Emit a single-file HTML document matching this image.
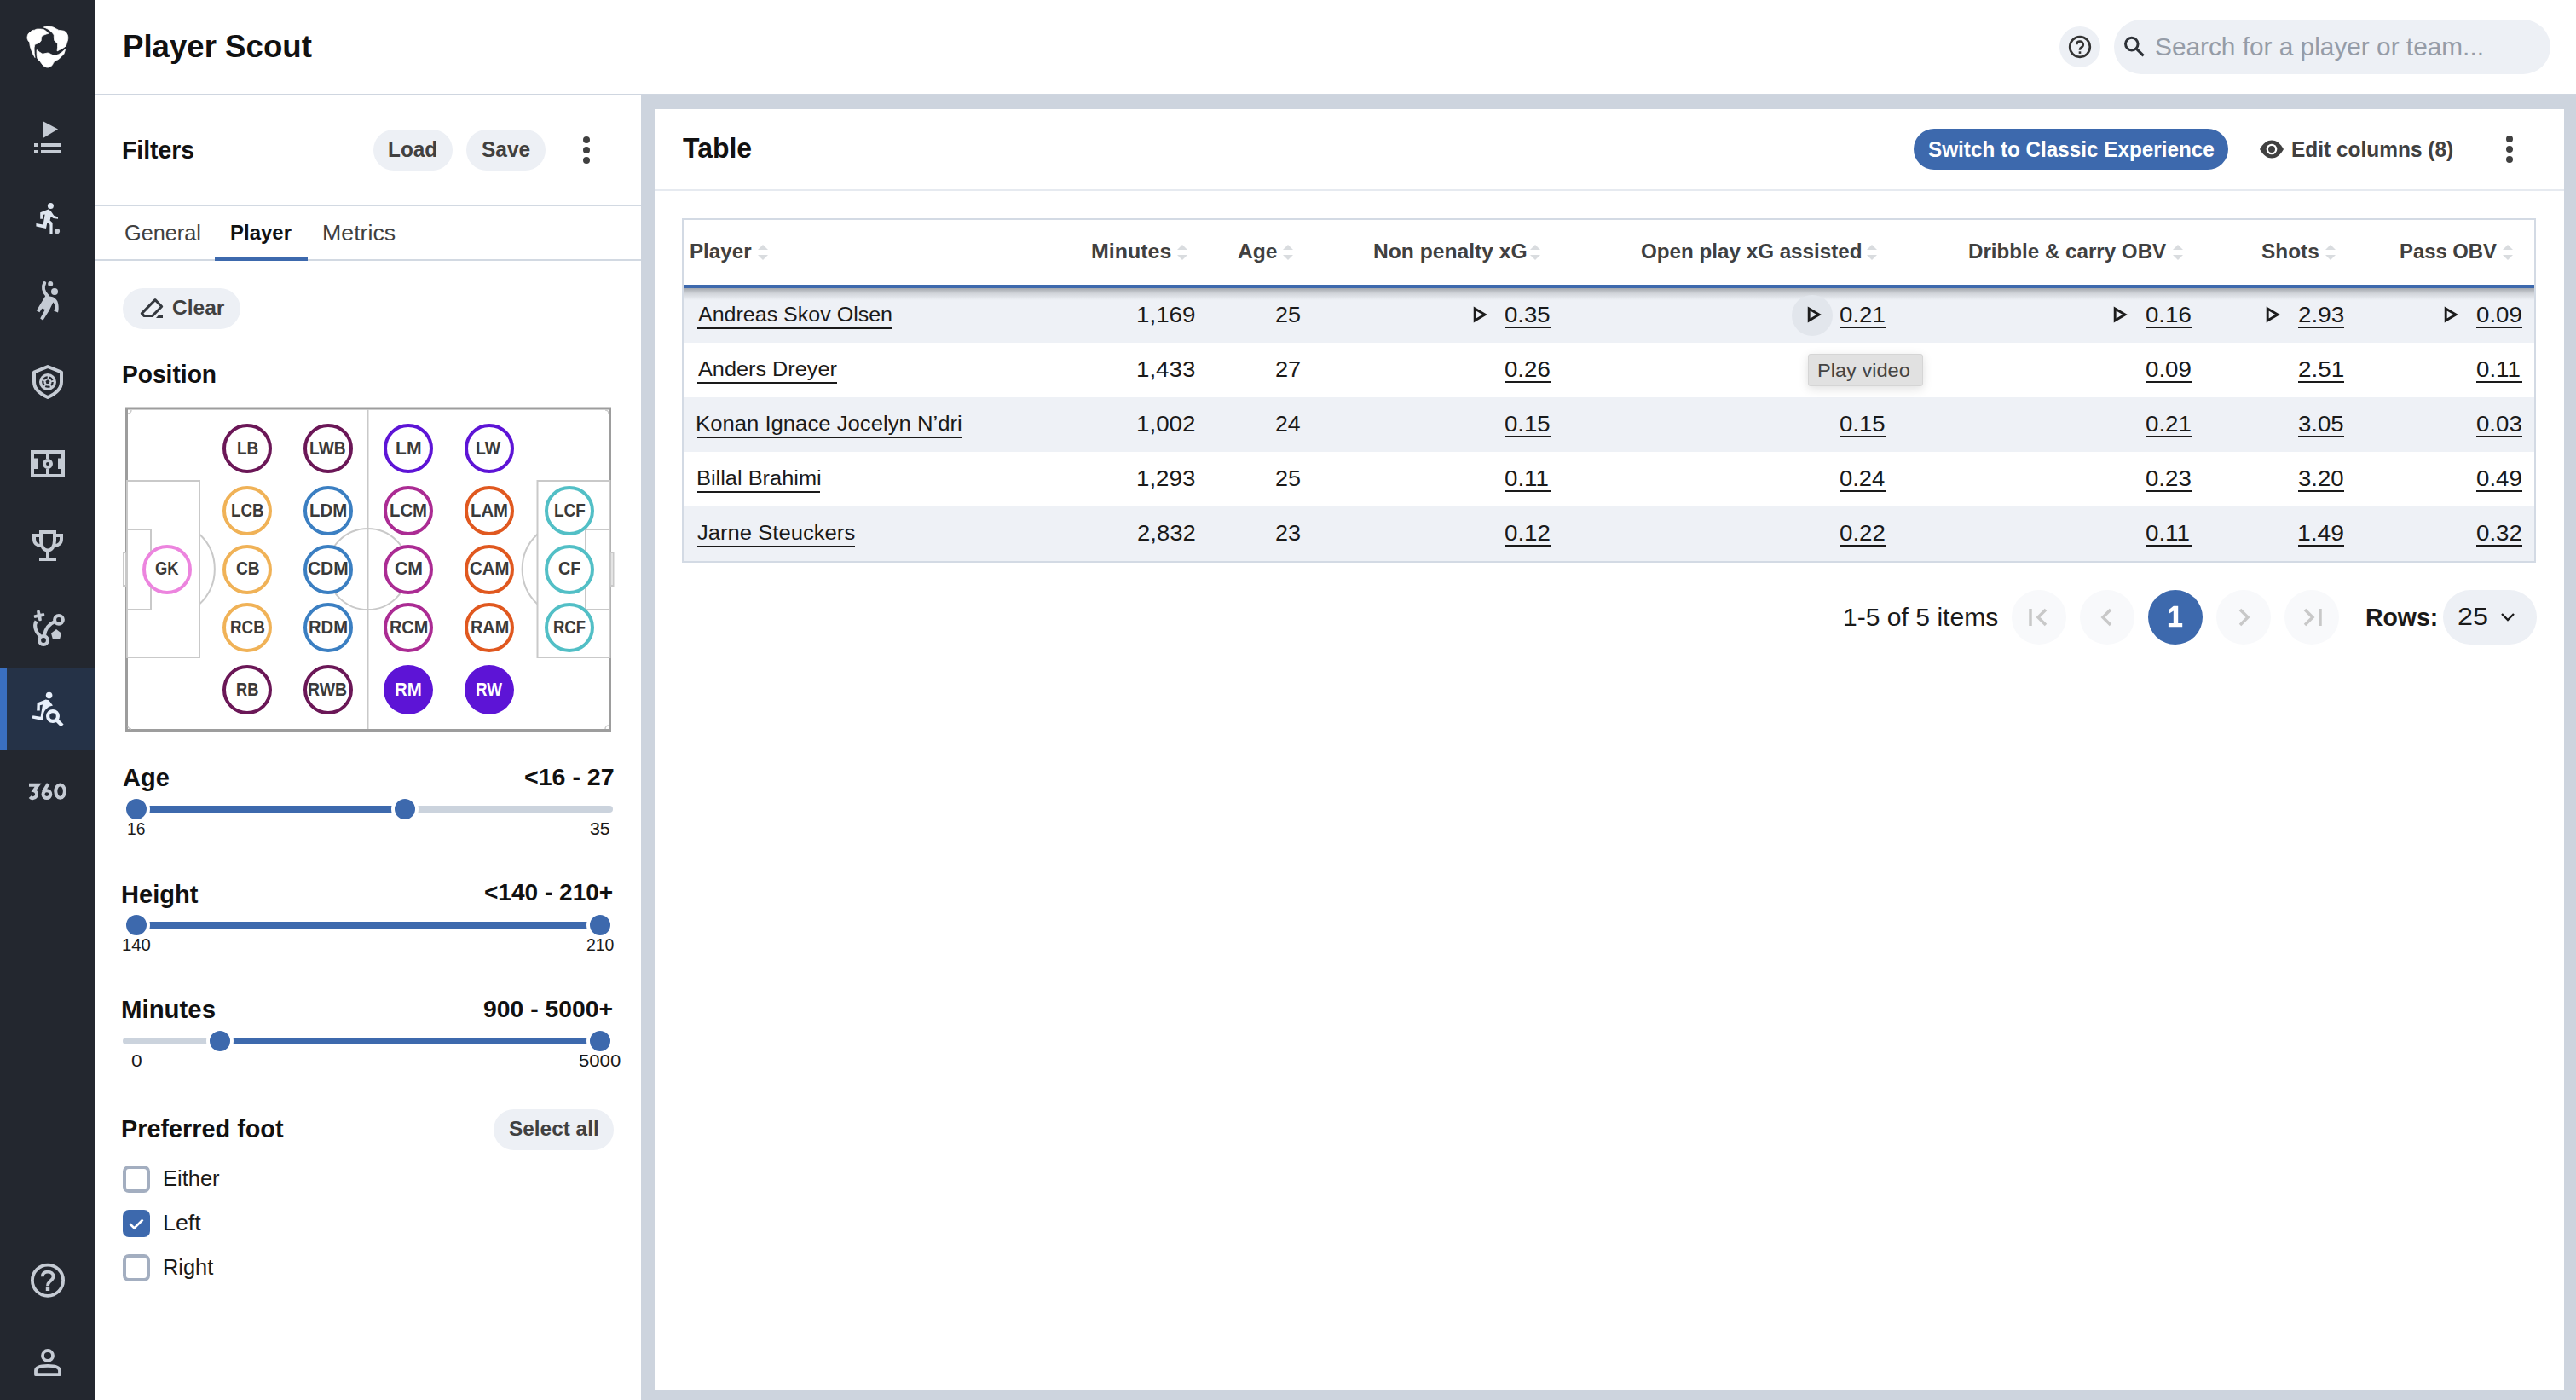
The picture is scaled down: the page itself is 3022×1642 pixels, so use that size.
<!DOCTYPE html><html><head><meta charset="utf-8"><style>
html,body{margin:0;padding:0;width:3022px;height:1642px;overflow:hidden;background:#fff;font-family:"Liberation Sans",sans-serif;}
.t{position:absolute;white-space:nowrap;}.r{position:absolute;}svg{position:absolute;overflow:visible;}
</style></head><body>
<div class="r" style="left:112px;top:112px;width:2910px;height:1530px;background:#cdd4de;"></div>
<div class="r" style="left:112px;top:112px;width:640px;height:1530px;background:#fff;"></div>
<div class="r" style="left:768px;top:128px;width:2240px;height:1502px;background:#fff;"></div>
<div class="r" style="left:112px;top:110px;width:2910px;height:2px;background:#cfd6e0;"></div>
<div class="r" style="left:0px;top:0px;width:112px;height:1642px;background:#23272f;"></div>
<div class="r" style="left:0px;top:784px;width:112px;height:96px;background:#253247;"></div>
<div class="r" style="left:0px;top:784px;width:8px;height:96px;background:#3a6fc0;"></div>
<div class="t" style="left:143.55px;top:36.11px;font-size:37.31px;line-height:37.31px;color:#111;transform:scaleX(0.9818);transform-origin:0 0;font-weight:700;">Player Scout</div>
<div class="r" style="left:2416px;top:31px;width:48px;height:48px;border-radius:50%;background:#edf0f5"></div>
<svg style="left:2426px;top:41px" width="28" height="28" viewBox="0 0 28 28"><circle cx="14" cy="14" r="11.8" fill="none" stroke="#333" stroke-width="2.7"/><path d="M10.3 11.3a3.7 3.7 0 1 1 5.5 3.2c-1.2.7-1.8 1.3-1.8 2.6v.7" fill="none" stroke="#333" stroke-width="2.6"/><rect x="12.7" y="19.3" width="2.6" height="2.6" fill="#333"/></svg>
<div class="r" style="left:2480px;top:23px;width:512px;height:64px;border-radius:32px;background:#edf0f5"></div>
<svg style="left:2490px;top:41px" width="28" height="28" viewBox="0 0 28 28"><circle cx="10.8" cy="10.6" r="7.3" fill="none" stroke="#2e3238" stroke-width="3"/><path d="M16 15.8l8.6 8.6" stroke="#2e3238" stroke-width="3.2"/></svg>
<div class="t" style="left:2527.95px;top:39.59px;font-size:30.01px;line-height:30.01px;color:#959ca7;transform:scaleX(0.9934);transform-origin:0 0;">Search for a player or team...</div>
<div class="t" style="left:143.10px;top:161.52px;font-size:28.91px;line-height:28.91px;color:#111;transform:scaleX(0.9804);transform-origin:0 0;font-weight:700;">Filters</div>
<div class="r" style="left:438px;top:152px;width:93px;height:48px;border-radius:24px;background:#edf0f5"></div>
<div class="r" style="left:547px;top:152px;width:93px;height:48px;border-radius:24px;background:#edf0f5"></div>
<div class="t" style="left:455.37px;top:163.34px;font-size:24.87px;line-height:24.87px;color:#404040;transform:scaleX(0.9803);transform-origin:0 0;font-weight:700;">Load</div>
<div class="t" style="left:565.29px;top:163.34px;font-size:24.87px;line-height:24.87px;color:#404040;transform:scaleX(0.9855);transform-origin:0 0;font-weight:700;">Save</div>
<div class="r" style="left:684px;top:160px;width:8px;height:8px;border-radius:50%;background:#404040"></div>
<div class="r" style="left:684px;top:172px;width:8px;height:8px;border-radius:50%;background:#404040"></div>
<div class="r" style="left:684px;top:184px;width:8px;height:8px;border-radius:50%;background:#404040"></div>
<div class="r" style="left:112px;top:240px;width:640px;height:2px;background:#d2d9e2;"></div>
<div class="t" style="left:145.73px;top:260.80px;font-size:25.04px;line-height:25.04px;color:#404040;transform:scaleX(1.0099);transform-origin:0 0;">General</div>
<div class="t" style="left:270.40px;top:261.31px;font-size:24.44px;line-height:24.44px;color:#111;transform:scaleX(0.9807);transform-origin:0 0;font-weight:700;">Player</div>
<div class="t" style="left:377.81px;top:260.80px;font-size:25.04px;line-height:25.04px;color:#404040;transform:scaleX(1.0678);transform-origin:0 0;">Metrics</div>
<div class="r" style="left:112px;top:304px;width:640px;height:2px;background:#d2d9e2;"></div>
<div class="r" style="left:252px;top:302px;width:109px;height:4px;background:#3d69ad;"></div>
<div class="r" style="left:144px;top:338px;width:138px;height:48px;border-radius:24px;background:#edf0f5"></div>
<svg style="left:155px;top:340px" width="50" height="40" viewBox="0 0 50 40"><path d="M27 11.6 L34.7 19.5 L23.6 30.6 H14.2 L11.3 27.6 Z" fill="none" stroke="#35393f" stroke-width="3" stroke-linejoin="round"/><path d="M28 33 L31.5 29 H36 V33 Z" fill="#35393f"/></svg>
<div class="t" style="left:201.99px;top:349.38px;font-size:24.35px;line-height:24.35px;color:#404040;transform:scaleX(1.0075);transform-origin:0 0;font-weight:700;">Clear</div>
<div class="t" style="left:142.72px;top:424.56px;font-size:28.86px;line-height:28.86px;color:#111;transform:scaleX(0.9753);transform-origin:0 0;font-weight:700;">Position</div>
<svg style="left:0;top:0" width="3022" height="1642"><rect x="148.5" y="479" width="567" height="377.5" fill="none" stroke="#9d9d9d" stroke-width="3"/><line x1="431.5" y1="480" x2="431.5" y2="855" stroke="#c9c9c9" stroke-width="2"/><circle cx="431.5" cy="667.5" r="47.5" fill="none" stroke="#c9c9c9" stroke-width="2"/><rect x="149" y="564" width="85" height="207" fill="none" stroke="#c9c9c9" stroke-width="2"/><rect x="149" y="621" width="28" height="94" fill="none" stroke="#c9c9c9" stroke-width="2"/><rect x="630.5" y="564" width="85" height="207" fill="none" stroke="#c9c9c9" stroke-width="2"/><rect x="687" y="621" width="28" height="94" fill="none" stroke="#c9c9c9" stroke-width="2"/><path d="M234 626.5 A56 56 0 0 1 234 708.5" fill="none" stroke="#c9c9c9" stroke-width="2"/><path d="M630.5 626.5 A56 56 0 0 0 630.5 708.5" fill="none" stroke="#c9c9c9" stroke-width="2"/><rect x="145" y="648" width="3" height="39" fill="none" stroke="#c9c9c9" stroke-width="2"/><rect x="716.5" y="648" width="3" height="39" fill="none" stroke="#c9c9c9" stroke-width="2"/><path d="M150 485 A4 4 0 0 0 154 481" fill="none" stroke="#c9c9c9" stroke-width="1.5"/><path d="M714 485 A4 4 0 0 0 710 481" fill="none" stroke="#c9c9c9" stroke-width="1.5"/><path d="M150 851 A4 4 0 0 0 154 855" fill="none" stroke="#c9c9c9" stroke-width="1.5"/><path d="M714 851 A4 4 0 0 0 710 855" fill="none" stroke="#c9c9c9" stroke-width="1.5"/></svg>
<div class="r" style="left:167.0px;top:638.5px;width:50px;height:50px;border-radius:50%;border:4px solid #ec84de;background:#fff"></div>
<div class="t" style="left:182.25px;top:656.37px;font-size:22.00px;line-height:22.00px;color:#3a3a3a;transform:scaleX(0.8340);transform-origin:0 0;font-weight:700;">GK</div>
<div class="r" style="left:261.3px;top:497.0px;width:50px;height:50px;border-radius:50%;border:4px solid #6b1757;background:#fff"></div>
<div class="t" style="left:277.78px;top:514.87px;font-size:22.00px;line-height:22.00px;color:#3a3a3a;transform:scaleX(0.8602);transform-origin:0 0;font-weight:700;">LB</div>
<div class="r" style="left:261.3px;top:569.8px;width:50px;height:50px;border-radius:50%;border:4px solid #f0b257;background:#fff"></div>
<div class="t" style="left:271.20px;top:587.67px;font-size:22.00px;line-height:22.00px;color:#3a3a3a;transform:scaleX(0.8493);transform-origin:0 0;font-weight:700;">LCB</div>
<div class="r" style="left:261.3px;top:638.5px;width:50px;height:50px;border-radius:50%;border:4px solid #f0b257;background:#fff"></div>
<div class="t" style="left:276.81px;top:656.37px;font-size:22.00px;line-height:22.00px;color:#3a3a3a;transform:scaleX(0.8703);transform-origin:0 0;font-weight:700;">CB</div>
<div class="r" style="left:261.3px;top:707.0px;width:50px;height:50px;border-radius:50%;border:4px solid #f0b257;background:#fff"></div>
<div class="t" style="left:270.04px;top:724.87px;font-size:22.00px;line-height:22.00px;color:#3a3a3a;transform:scaleX(0.8541);transform-origin:0 0;font-weight:700;">RCB</div>
<div class="r" style="left:261.3px;top:780.3px;width:50px;height:50px;border-radius:50%;border:4px solid #6b1757;background:#fff"></div>
<div class="t" style="left:277.23px;top:798.17px;font-size:22.00px;line-height:22.00px;color:#3a3a3a;transform:scaleX(0.8292);transform-origin:0 0;font-weight:700;">RB</div>
<div class="r" style="left:355.6px;top:497.0px;width:50px;height:50px;border-radius:50%;border:4px solid #6b1757;background:#fff"></div>
<div class="t" style="left:362.92px;top:514.87px;font-size:22.00px;line-height:22.00px;color:#3a3a3a;transform:scaleX(0.8694);transform-origin:0 0;font-weight:700;">LWB</div>
<div class="r" style="left:355.6px;top:569.8px;width:50px;height:50px;border-radius:50%;border:4px solid #3b7fc2;background:#fff"></div>
<div class="t" style="left:362.84px;top:587.67px;font-size:22.00px;line-height:22.00px;color:#3a3a3a;transform:scaleX(0.9260);transform-origin:0 0;font-weight:700;">LDM</div>
<div class="r" style="left:355.6px;top:638.5px;width:50px;height:50px;border-radius:50%;border:4px solid #3b7fc2;background:#fff"></div>
<div class="t" style="left:361.34px;top:656.37px;font-size:22.00px;line-height:22.00px;color:#3a3a3a;transform:scaleX(0.9512);transform-origin:0 0;font-weight:700;">CDM</div>
<div class="r" style="left:355.6px;top:707.0px;width:50px;height:50px;border-radius:50%;border:4px solid #3b7fc2;background:#fff"></div>
<div class="t" style="left:361.85px;top:724.87px;font-size:22.00px;line-height:22.00px;color:#3a3a3a;transform:scaleX(0.9203);transform-origin:0 0;font-weight:700;">RDM</div>
<div class="r" style="left:355.6px;top:780.3px;width:50px;height:50px;border-radius:50%;border:4px solid #6b1757;background:#fff"></div>
<div class="t" style="left:361.45px;top:798.17px;font-size:22.00px;line-height:22.00px;color:#3a3a3a;transform:scaleX(0.8848);transform-origin:0 0;font-weight:700;">RWB</div>
<div class="r" style="left:450.0px;top:497.0px;width:50px;height:50px;border-radius:50%;border:4px solid #5d14d6;background:#fff"></div>
<div class="t" style="left:464.04px;top:514.87px;font-size:22.00px;line-height:22.00px;color:#3a3a3a;transform:scaleX(0.9611);transform-origin:0 0;font-weight:700;">LM</div>
<div class="r" style="left:450.0px;top:569.8px;width:50px;height:50px;border-radius:50%;border:4px solid #ab2b93;background:#fff"></div>
<div class="t" style="left:457.34px;top:587.67px;font-size:22.00px;line-height:22.00px;color:#3a3a3a;transform:scaleX(0.9215);transform-origin:0 0;font-weight:700;">LCM</div>
<div class="r" style="left:450.0px;top:638.5px;width:50px;height:50px;border-radius:50%;border:4px solid #ab2b93;background:#fff"></div>
<div class="t" style="left:463.08px;top:656.37px;font-size:22.00px;line-height:22.00px;color:#3a3a3a;transform:scaleX(0.9642);transform-origin:0 0;font-weight:700;">CM</div>
<div class="r" style="left:450.0px;top:707.0px;width:50px;height:50px;border-radius:50%;border:4px solid #ab2b93;background:#fff"></div>
<div class="t" style="left:456.72px;top:724.87px;font-size:22.00px;line-height:22.00px;color:#3a3a3a;transform:scaleX(0.9012);transform-origin:0 0;font-weight:700;">RCM</div>
<div class="r" style="left:450.0px;top:780.3px;width:58px;height:58px;border-radius:50%;background:#5d14d6;"></div>
<div class="t" style="left:463.44px;top:798.17px;font-size:22.00px;line-height:22.00px;color:#fff;transform:scaleX(0.9274);transform-origin:0 0;font-weight:700;">RM</div>
<div class="r" style="left:544.8px;top:497.0px;width:50px;height:50px;border-radius:50%;border:4px solid #5d14d6;background:#fff"></div>
<div class="t" style="left:558.30px;top:514.87px;font-size:22.00px;line-height:22.00px;color:#3a3a3a;transform:scaleX(0.8866);transform-origin:0 0;font-weight:700;">LW</div>
<div class="r" style="left:544.8px;top:569.8px;width:50px;height:50px;border-radius:50%;border:4px solid #e0581f;background:#fff"></div>
<div class="t" style="left:552.14px;top:587.67px;font-size:22.00px;line-height:22.00px;color:#3a3a3a;transform:scaleX(0.9215);transform-origin:0 0;font-weight:700;">LAM</div>
<div class="r" style="left:544.8px;top:638.5px;width:50px;height:50px;border-radius:50%;border:4px solid #e0581f;background:#fff"></div>
<div class="t" style="left:551.16px;top:656.37px;font-size:22.00px;line-height:22.00px;color:#3a3a3a;transform:scaleX(0.9261);transform-origin:0 0;font-weight:700;">CAM</div>
<div class="r" style="left:544.8px;top:707.0px;width:50px;height:50px;border-radius:50%;border:4px solid #e0581f;background:#fff"></div>
<div class="t" style="left:551.52px;top:724.87px;font-size:22.00px;line-height:22.00px;color:#3a3a3a;transform:scaleX(0.9012);transform-origin:0 0;font-weight:700;">RAM</div>
<div class="r" style="left:544.8px;top:780.3px;width:58px;height:58px;border-radius:50%;background:#5d14d6;"></div>
<div class="t" style="left:557.84px;top:798.17px;font-size:22.00px;line-height:22.00px;color:#fff;transform:scaleX(0.8533);transform-origin:0 0;font-weight:700;">RW</div>
<div class="r" style="left:639.0px;top:569.8px;width:50px;height:50px;border-radius:50%;border:4px solid #52bfc6;background:#fff"></div>
<div class="t" style="left:649.64px;top:587.67px;font-size:22.00px;line-height:22.00px;color:#3a3a3a;transform:scaleX(0.8595);transform-origin:0 0;font-weight:700;">LCF</div>
<div class="r" style="left:639.0px;top:638.5px;width:50px;height:50px;border-radius:50%;border:4px solid #52bfc6;background:#fff"></div>
<div class="t" style="left:655.14px;top:656.37px;font-size:22.00px;line-height:22.00px;color:#3a3a3a;transform:scaleX(0.8943);transform-origin:0 0;font-weight:700;">CF</div>
<div class="r" style="left:639.0px;top:707.0px;width:50px;height:50px;border-radius:50%;border:4px solid #52bfc6;background:#fff"></div>
<div class="t" style="left:649.07px;top:724.87px;font-size:22.00px;line-height:22.00px;color:#3a3a3a;transform:scaleX(0.8384);transform-origin:0 0;font-weight:700;">RCF</div>
<div class="t" style="left:143.68px;top:898.31px;font-size:28.68px;line-height:28.68px;color:#111;transform:scaleX(1.0115);transform-origin:0 0;font-weight:700;">Age</div>
<div class="t" style="left:614.50px;top:898.61px;font-size:27.03px;line-height:27.03px;color:#111;transform:scaleX(1.0572);transform-origin:0 0;font-weight:700;">&lt;16 - 27</div>
<div class="r" style="left:144px;top:945px;width:575px;height:8px;background:#cbd3dd;border-radius:4px;"></div>
<div class="r" style="left:160px;top:945px;width:315px;height:8px;background:#3d69ad;"></div>
<div class="r" style="left:144px;top:933px;width:24px;height:24px;border-radius:50%;background:#3d69ad;border:4px solid #fff"></div>
<div class="r" style="left:459px;top:933px;width:24px;height:24px;border-radius:50%;background:#3d69ad;border:4px solid #fff"></div>
<div class="t" style="left:149.03px;top:962.99px;font-size:19.50px;line-height:19.50px;color:#1a1a1a;transform:scaleX(0.9872);transform-origin:0 0;">16</div>
<div class="t" style="left:692.19px;top:962.99px;font-size:19.50px;line-height:19.50px;color:#1a1a1a;transform:scaleX(1.0930);transform-origin:0 0;">35</div>
<div class="t" style="left:142.46px;top:1034.81px;font-size:28.68px;line-height:28.68px;color:#111;transform:scaleX(1.0131);transform-origin:0 0;font-weight:700;">Height</div>
<div class="t" style="left:567.82px;top:1033.71px;font-size:27.03px;line-height:27.03px;color:#111;transform:scaleX(1.0379);transform-origin:0 0;font-weight:700;">&lt;140 - 210+</div>
<div class="r" style="left:144px;top:1081px;width:575px;height:8px;background:#cbd3dd;border-radius:4px;"></div>
<div class="r" style="left:160px;top:1081px;width:544px;height:8px;background:#3d69ad;"></div>
<div class="r" style="left:144px;top:1069px;width:24px;height:24px;border-radius:50%;background:#3d69ad;border:4px solid #fff"></div>
<div class="r" style="left:688px;top:1069px;width:24px;height:24px;border-radius:50%;background:#3d69ad;border:4px solid #fff"></div>
<div class="t" style="left:142.86px;top:1098.99px;font-size:19.50px;line-height:19.50px;color:#1a1a1a;transform:scaleX(1.0400);transform-origin:0 0;">140</div>
<div class="t" style="left:687.62px;top:1098.99px;font-size:19.50px;line-height:19.50px;color:#1a1a1a;transform:scaleX(0.9970);transform-origin:0 0;">210</div>
<div class="t" style="left:142.43px;top:1170.41px;font-size:28.68px;line-height:28.68px;color:#111;transform:scaleX(1.0250);transform-origin:0 0;font-weight:700;">Minutes</div>
<div class="t" style="left:567.02px;top:1170.61px;font-size:27.03px;line-height:27.03px;color:#111;transform:scaleX(1.0489);transform-origin:0 0;font-weight:700;">900 - 5000+</div>
<div class="r" style="left:144px;top:1217px;width:575px;height:8px;background:#cbd3dd;border-radius:4px;"></div>
<div class="r" style="left:258px;top:1217px;width:446px;height:8px;background:#3d69ad;"></div>
<div class="r" style="left:242px;top:1205px;width:24px;height:24px;border-radius:50%;background:#3d69ad;border:4px solid #fff"></div>
<div class="r" style="left:688px;top:1205px;width:24px;height:24px;border-radius:50%;background:#3d69ad;border:4px solid #fff"></div>
<div class="t" style="left:153.61px;top:1235.29px;font-size:19.50px;line-height:19.50px;color:#1a1a1a;transform:scaleX(1.1693);transform-origin:0 0;">0</div>
<div class="t" style="left:679.11px;top:1235.29px;font-size:19.50px;line-height:19.50px;color:#1a1a1a;transform:scaleX(1.1353);transform-origin:0 0;">5000</div>
<div class="t" style="left:142.47px;top:1310.32px;font-size:29.15px;line-height:29.15px;color:#111;transform:scaleX(0.9888);transform-origin:0 0;font-weight:700;">Preferred foot</div>
<div class="r" style="left:579px;top:1301px;width:141px;height:48px;border-radius:24px;background:#edf0f5"></div>
<div class="t" style="left:597.00px;top:1312.22px;font-size:24.55px;line-height:24.55px;color:#404040;transform:scaleX(0.9934);transform-origin:0 0;font-weight:700;">Select all</div>
<div class="r" style="left:144px;top:1367px;width:24px;height:24px;border-radius:7px;border:4px solid #a3aec0;background:#fff"></div>
<div class="t" style="left:190.91px;top:1370.22px;font-size:24.90px;line-height:24.90px;color:#1a1a1a;transform:scaleX(1.0243);transform-origin:0 0;">Either</div>
<div class="r" style="left:144px;top:1419px;width:32px;height:32px;border-radius:7px;background:#3d69ad"></div>
<svg style="left:144px;top:1419px" width="32" height="32" viewBox="0 0 32 32"><path d="M8.5 16.5l5 5 10-10" fill="none" stroke="#fff" stroke-width="2.6"/></svg>
<div class="t" style="left:190.80px;top:1421.52px;font-size:24.90px;line-height:24.90px;color:#1a1a1a;transform:scaleX(1.0763);transform-origin:0 0;">Left</div>
<div class="r" style="left:144px;top:1471px;width:24px;height:24px;border-radius:7px;border:4px solid #a3aec0;background:#fff"></div>
<div class="t" style="left:190.92px;top:1473.92px;font-size:24.90px;line-height:24.90px;color:#1a1a1a;transform:scaleX(1.0198);transform-origin:0 0;">Right</div>
<div class="t" style="left:801.04px;top:158.15px;font-size:32.42px;line-height:32.42px;color:#111;transform:scaleX(0.9857);transform-origin:0 0;font-weight:700;">Table</div>
<div class="r" style="left:2245px;top:151px;width:369px;height:48px;border-radius:24px;background:#3d69ad"></div>
<div class="t" style="left:2261.90px;top:162.14px;font-size:26.05px;line-height:26.05px;color:#fff;transform:scaleX(0.9317);transform-origin:0 0;font-weight:700;">Switch to Classic Experience</div>
<svg style="left:2649px;top:162px" width="32" height="26" viewBox="0 0 32 26"><path d="M2 13C6 5.5 11 2.5 16 2.5S26 5.5 30 13C26 20.5 21 23.5 16 23.5S6 20.5 2 13z" fill="#404040"/><circle cx="16" cy="13" r="6.3" fill="#fff"/><circle cx="16" cy="13" r="4" fill="#404040"/></svg>
<div class="t" style="left:2687.76px;top:162.18px;font-size:26.00px;line-height:26.00px;color:#404040;transform:scaleX(0.9406);transform-origin:0 0;font-weight:700;">Edit columns (8)</div>
<div class="r" style="left:2940px;top:159px;width:8px;height:8px;border-radius:50%;background:#404040"></div>
<div class="r" style="left:2940px;top:171px;width:8px;height:8px;border-radius:50%;background:#404040"></div>
<div class="r" style="left:2940px;top:183px;width:8px;height:8px;border-radius:50%;background:#404040"></div>
<div class="r" style="left:768px;top:222px;width:2240px;height:2px;background:#e6eaf0;"></div>
<div class="r" style="left:800px;top:256px;width:2171px;height:400px;border:2px solid #d3dae4;"></div>
<div class="r" style="left:802px;top:338px;width:2171px;height:64px;background:#eef1f6;"></div>
<div class="r" style="left:802px;top:466px;width:2171px;height:64px;background:#eef1f6;"></div>
<div class="r" style="left:802px;top:594px;width:2171px;height:64px;background:#eef1f6;"></div>
<div class="r" style="left:802px;top:338px;width:2171px;height:14px;background:linear-gradient(rgba(60,65,72,0.42),rgba(60,65,72,0.16) 45%,rgba(60,65,72,0))"></div>
<div class="r" style="left:802px;top:334px;width:2171px;height:4px;background:#3d69ad;"></div>
<div class="t" style="left:809.38px;top:283.01px;font-size:24.79px;line-height:24.79px;color:#404040;transform:scaleX(0.9752);transform-origin:0 0;font-weight:700;">Player</div>
<svg style="left:888px;top:285px" width="14" height="22" viewBox="0 0 14 22"><path d="M7 2L13 8H1z" fill="#d9dcdf"/><path d="M7 20L13 14H1z" fill="#d9dcdf"/></svg>
<div class="t" style="left:1280.33px;top:283.01px;font-size:24.79px;line-height:24.79px;color:#404040;transform:scaleX(1.0068);transform-origin:0 0;font-weight:700;">Minutes</div>
<svg style="left:1380px;top:285px" width="14" height="22" viewBox="0 0 14 22"><path d="M7 2L13 8H1z" fill="#d9dcdf"/><path d="M7 20L13 14H1z" fill="#d9dcdf"/></svg>
<div class="t" style="left:1452.39px;top:283.01px;font-size:24.79px;line-height:24.79px;color:#404040;transform:scaleX(0.9919);transform-origin:0 0;font-weight:700;">Age</div>
<svg style="left:1504px;top:285px" width="14" height="22" viewBox="0 0 14 22"><path d="M7 2L13 8H1z" fill="#d9dcdf"/><path d="M7 20L13 14H1z" fill="#d9dcdf"/></svg>
<div class="t" style="left:1610.85px;top:283.01px;font-size:24.79px;line-height:24.79px;color:#404040;transform:scaleX(0.9937);transform-origin:0 0;font-weight:700;">Non penalty xG</div>
<svg style="left:1794px;top:285px" width="14" height="22" viewBox="0 0 14 22"><path d="M7 2L13 8H1z" fill="#d9dcdf"/><path d="M7 20L13 14H1z" fill="#d9dcdf"/></svg>
<div class="t" style="left:1925.01px;top:283.01px;font-size:24.79px;line-height:24.79px;color:#404040;transform:scaleX(0.9762);transform-origin:0 0;font-weight:700;">Open play xG assisted</div>
<svg style="left:2189px;top:285px" width="14" height="22" viewBox="0 0 14 22"><path d="M7 2L13 8H1z" fill="#d9dcdf"/><path d="M7 20L13 14H1z" fill="#d9dcdf"/></svg>
<div class="t" style="left:2309.38px;top:283.01px;font-size:24.79px;line-height:24.79px;color:#404040;transform:scaleX(0.9746);transform-origin:0 0;font-weight:700;">Dribble &amp; carry OBV</div>
<svg style="left:2548px;top:285px" width="14" height="22" viewBox="0 0 14 22"><path d="M7 2L13 8H1z" fill="#d9dcdf"/><path d="M7 20L13 14H1z" fill="#d9dcdf"/></svg>
<div class="t" style="left:2653.30px;top:283.01px;font-size:24.79px;line-height:24.79px;color:#404040;transform:scaleX(0.9831);transform-origin:0 0;font-weight:700;">Shots</div>
<svg style="left:2727px;top:285px" width="14" height="22" viewBox="0 0 14 22"><path d="M7 2L13 8H1z" fill="#d9dcdf"/><path d="M7 20L13 14H1z" fill="#d9dcdf"/></svg>
<div class="t" style="left:2815.21px;top:283.01px;font-size:24.79px;line-height:24.79px;color:#404040;transform:scaleX(0.9616);transform-origin:0 0;font-weight:700;">Pass OBV</div>
<svg style="left:2935px;top:285px" width="14" height="22" viewBox="0 0 14 22"><path d="M7 2L13 8H1z" fill="#d9dcdf"/><path d="M7 20L13 14H1z" fill="#d9dcdf"/></svg>
<div class="t" style="left:818.55px;top:357.04px;font-size:24.75px;line-height:24.75px;color:#1a1a1a;transform:scaleX(1.0107);transform-origin:0 0;">Andreas Skov Olsen</div>
<div class="r" style="left:817.6px;top:384.0px;width:228.4px;height:2px;background:#1a1a1a"></div>
<div class="t" style="left:1332.89px;top:355.99px;font-size:25.99px;line-height:25.99px;color:#1a1a1a;transform:scaleX(1.0675);transform-origin:0 0;">1,169</div>
<div class="t" style="left:1495.64px;top:355.99px;font-size:25.99px;line-height:25.99px;color:#1a1a1a;transform:scaleX(1.0373);transform-origin:0 0;">25</div>
<div class="t" style="left:1765.42px;top:355.99px;font-size:25.99px;line-height:25.99px;color:#1a1a1a;transform:scaleX(1.0623);transform-origin:0 0;">0.35</div>
<div class="r" style="left:1765.5px;top:383.0px;width:53.5px;height:2px;background:#1a1a1a"></div>
<div class="t" style="left:2158.22px;top:355.99px;font-size:25.99px;line-height:25.99px;color:#1a1a1a;transform:scaleX(1.0662);transform-origin:0 0;">0.21</div>
<div class="r" style="left:2158.3px;top:383.0px;width:53.5px;height:2px;background:#1a1a1a"></div>
<div class="t" style="left:2517.12px;top:355.99px;font-size:25.99px;line-height:25.99px;color:#1a1a1a;transform:scaleX(1.0634);transform-origin:0 0;">0.16</div>
<div class="r" style="left:2517.2px;top:383.0px;width:53.5px;height:2px;background:#1a1a1a"></div>
<div class="t" style="left:2695.60px;top:355.99px;font-size:25.99px;line-height:25.99px;color:#1a1a1a;transform:scaleX(1.0699);transform-origin:0 0;">2.93</div>
<div class="r" style="left:2696.0px;top:383.0px;width:53.5px;height:2px;background:#1a1a1a"></div>
<div class="t" style="left:2905.22px;top:355.99px;font-size:25.99px;line-height:25.99px;color:#1a1a1a;transform:scaleX(1.0654);transform-origin:0 0;">0.09</div>
<div class="r" style="left:2905.3px;top:383.0px;width:53.5px;height:2px;background:#1a1a1a"></div>
<div class="t" style="left:818.55px;top:421.04px;font-size:24.75px;line-height:24.75px;color:#1a1a1a;transform:scaleX(1.0212);transform-origin:0 0;">Anders Dreyer</div>
<div class="r" style="left:817.6px;top:448.0px;width:164.5px;height:2px;background:#1a1a1a"></div>
<div class="t" style="left:1332.89px;top:419.99px;font-size:25.99px;line-height:25.99px;color:#1a1a1a;transform:scaleX(1.0659);transform-origin:0 0;">1,433</div>
<div class="t" style="left:1495.63px;top:419.99px;font-size:25.99px;line-height:25.99px;color:#1a1a1a;transform:scaleX(1.0458);transform-origin:0 0;">27</div>
<div class="t" style="left:1765.42px;top:419.99px;font-size:25.99px;line-height:25.99px;color:#1a1a1a;transform:scaleX(1.0634);transform-origin:0 0;">0.26</div>
<div class="r" style="left:1765.5px;top:447.0px;width:53.5px;height:2px;background:#1a1a1a"></div>
<div class="t" style="left:2517.12px;top:419.99px;font-size:25.99px;line-height:25.99px;color:#1a1a1a;transform:scaleX(1.0654);transform-origin:0 0;">0.09</div>
<div class="r" style="left:2517.2px;top:447.0px;width:53.5px;height:2px;background:#1a1a1a"></div>
<div class="t" style="left:2695.60px;top:419.99px;font-size:25.99px;line-height:25.99px;color:#1a1a1a;transform:scaleX(1.0727);transform-origin:0 0;">2.51</div>
<div class="r" style="left:2696.0px;top:447.0px;width:53.5px;height:2px;background:#1a1a1a"></div>
<div class="t" style="left:2905.22px;top:419.99px;font-size:25.99px;line-height:25.99px;color:#1a1a1a;transform:scaleX(1.0662);transform-origin:0 0;">0.11</div>
<div class="r" style="left:2905.3px;top:447.0px;width:53.5px;height:2px;background:#1a1a1a"></div>
<div class="t" style="left:816.49px;top:485.04px;font-size:24.75px;line-height:24.75px;color:#1a1a1a;transform:scaleX(1.0378);transform-origin:0 0;">Konan Ignace Jocelyn N’dri</div>
<div class="r" style="left:817.6px;top:512.0px;width:310.9px;height:2px;background:#1a1a1a"></div>
<div class="t" style="left:1332.88px;top:483.99px;font-size:25.99px;line-height:25.99px;color:#1a1a1a;transform:scaleX(1.0688);transform-origin:0 0;">1,002</div>
<div class="t" style="left:1495.66px;top:483.99px;font-size:25.99px;line-height:25.99px;color:#1a1a1a;transform:scaleX(1.0246);transform-origin:0 0;">24</div>
<div class="t" style="left:1765.42px;top:483.99px;font-size:25.99px;line-height:25.99px;color:#1a1a1a;transform:scaleX(1.0623);transform-origin:0 0;">0.15</div>
<div class="r" style="left:1765.5px;top:511.0px;width:53.5px;height:2px;background:#1a1a1a"></div>
<div class="t" style="left:2158.22px;top:483.99px;font-size:25.99px;line-height:25.99px;color:#1a1a1a;transform:scaleX(1.0623);transform-origin:0 0;">0.15</div>
<div class="r" style="left:2158.3px;top:511.0px;width:53.5px;height:2px;background:#1a1a1a"></div>
<div class="t" style="left:2517.12px;top:483.99px;font-size:25.99px;line-height:25.99px;color:#1a1a1a;transform:scaleX(1.0662);transform-origin:0 0;">0.21</div>
<div class="r" style="left:2517.2px;top:511.0px;width:53.5px;height:2px;background:#1a1a1a"></div>
<div class="t" style="left:2695.95px;top:483.99px;font-size:25.99px;line-height:25.99px;color:#1a1a1a;transform:scaleX(1.0618);transform-origin:0 0;">3.05</div>
<div class="r" style="left:2696.0px;top:511.0px;width:53.5px;height:2px;background:#1a1a1a"></div>
<div class="t" style="left:2905.22px;top:483.99px;font-size:25.99px;line-height:25.99px;color:#1a1a1a;transform:scaleX(1.0634);transform-origin:0 0;">0.03</div>
<div class="r" style="left:2905.3px;top:511.0px;width:53.5px;height:2px;background:#1a1a1a"></div>
<div class="t" style="left:816.52px;top:549.04px;font-size:24.75px;line-height:24.75px;color:#1a1a1a;transform:scaleX(1.0254);transform-origin:0 0;">Billal Brahimi</div>
<div class="r" style="left:817.6px;top:576.0px;width:144.9px;height:2px;background:#1a1a1a"></div>
<div class="t" style="left:1332.89px;top:547.99px;font-size:25.99px;line-height:25.99px;color:#1a1a1a;transform:scaleX(1.0659);transform-origin:0 0;">1,293</div>
<div class="t" style="left:1495.64px;top:547.99px;font-size:25.99px;line-height:25.99px;color:#1a1a1a;transform:scaleX(1.0373);transform-origin:0 0;">25</div>
<div class="t" style="left:1765.42px;top:547.99px;font-size:25.99px;line-height:25.99px;color:#1a1a1a;transform:scaleX(1.0662);transform-origin:0 0;">0.11</div>
<div class="r" style="left:1765.5px;top:575.0px;width:53.5px;height:2px;background:#1a1a1a"></div>
<div class="t" style="left:2158.23px;top:547.99px;font-size:25.99px;line-height:25.99px;color:#1a1a1a;transform:scaleX(1.0551);transform-origin:0 0;">0.24</div>
<div class="r" style="left:2158.3px;top:575.0px;width:53.5px;height:2px;background:#1a1a1a"></div>
<div class="t" style="left:2517.12px;top:547.99px;font-size:25.99px;line-height:25.99px;color:#1a1a1a;transform:scaleX(1.0634);transform-origin:0 0;">0.23</div>
<div class="r" style="left:2517.2px;top:575.0px;width:53.5px;height:2px;background:#1a1a1a"></div>
<div class="t" style="left:2695.95px;top:547.99px;font-size:25.99px;line-height:25.99px;color:#1a1a1a;transform:scaleX(1.0601);transform-origin:0 0;">3.20</div>
<div class="r" style="left:2696.0px;top:575.0px;width:53.5px;height:2px;background:#1a1a1a"></div>
<div class="t" style="left:2905.22px;top:547.99px;font-size:25.99px;line-height:25.99px;color:#1a1a1a;transform:scaleX(1.0654);transform-origin:0 0;">0.49</div>
<div class="r" style="left:2905.3px;top:575.0px;width:53.5px;height:2px;background:#1a1a1a"></div>
<div class="t" style="left:818.20px;top:613.04px;font-size:24.75px;line-height:24.75px;color:#1a1a1a;transform:scaleX(1.0356);transform-origin:0 0;">Jarne Steuckers</div>
<div class="r" style="left:817.6px;top:640.0px;width:185.9px;height:2px;background:#1a1a1a"></div>
<div class="t" style="left:1333.62px;top:611.99px;font-size:25.99px;line-height:25.99px;color:#1a1a1a;transform:scaleX(1.0573);transform-origin:0 0;">2,832</div>
<div class="t" style="left:1495.64px;top:611.99px;font-size:25.99px;line-height:25.99px;color:#1a1a1a;transform:scaleX(1.0393);transform-origin:0 0;">23</div>
<div class="t" style="left:1765.42px;top:611.99px;font-size:25.99px;line-height:25.99px;color:#1a1a1a;transform:scaleX(1.0671);transform-origin:0 0;">0.12</div>
<div class="r" style="left:1765.5px;top:639.0px;width:53.5px;height:2px;background:#1a1a1a"></div>
<div class="t" style="left:2158.22px;top:611.99px;font-size:25.99px;line-height:25.99px;color:#1a1a1a;transform:scaleX(1.0671);transform-origin:0 0;">0.22</div>
<div class="r" style="left:2158.3px;top:639.0px;width:53.5px;height:2px;background:#1a1a1a"></div>
<div class="t" style="left:2517.12px;top:611.99px;font-size:25.99px;line-height:25.99px;color:#1a1a1a;transform:scaleX(1.0662);transform-origin:0 0;">0.11</div>
<div class="r" style="left:2517.2px;top:639.0px;width:53.5px;height:2px;background:#1a1a1a"></div>
<div class="t" style="left:2694.85px;top:611.99px;font-size:25.99px;line-height:25.99px;color:#1a1a1a;transform:scaleX(1.0871);transform-origin:0 0;">1.49</div>
<div class="r" style="left:2696.0px;top:639.0px;width:53.5px;height:2px;background:#1a1a1a"></div>
<div class="t" style="left:2905.22px;top:611.99px;font-size:25.99px;line-height:25.99px;color:#1a1a1a;transform:scaleX(1.0671);transform-origin:0 0;">0.32</div>
<div class="r" style="left:2905.3px;top:639.0px;width:53.5px;height:2px;background:#1a1a1a"></div>
<div class="r" style="left:2102px;top:346px;width:48px;height:48px;border-radius:50%;background:#e2e6ec"></div>
<svg style="left:1728px;top:360px" width="16" height="18" viewBox="0 0 16 18"><path d="M2.2 2L14 9L2.2 16z" fill="none" stroke="#1c1c1c" stroke-width="2.9" stroke-linejoin="miter"/></svg>
<svg style="left:2120px;top:360px" width="16" height="18" viewBox="0 0 16 18"><path d="M2.2 2L14 9L2.2 16z" fill="none" stroke="#1c1c1c" stroke-width="2.9" stroke-linejoin="miter"/></svg>
<svg style="left:2479px;top:360px" width="16" height="18" viewBox="0 0 16 18"><path d="M2.2 2L14 9L2.2 16z" fill="none" stroke="#1c1c1c" stroke-width="2.9" stroke-linejoin="miter"/></svg>
<svg style="left:2658px;top:360px" width="16" height="18" viewBox="0 0 16 18"><path d="M2.2 2L14 9L2.2 16z" fill="none" stroke="#1c1c1c" stroke-width="2.9" stroke-linejoin="miter"/></svg>
<svg style="left:2867px;top:360px" width="16" height="18" viewBox="0 0 16 18"><path d="M2.2 2L14 9L2.2 16z" fill="none" stroke="#1c1c1c" stroke-width="2.9" stroke-linejoin="miter"/></svg>
<div class="r" style="left:2121px;top:415px;width:133px;height:36px;background:#e1e1e1;border:1px solid #d5d5d5;border-radius:3px;box-shadow:0 3px 12px rgba(0,0,0,0.13)"></div>
<div class="t" style="left:2132.06px;top:422.73px;font-size:22.76px;line-height:22.76px;color:#444;transform:scaleX(1.0371);transform-origin:0 0;">Play video</div>
<div class="t" style="left:2162.11px;top:708.59px;font-size:30.01px;line-height:30.01px;color:#1a1a1a;transform:scaleX(1.0031);transform-origin:0 0;">1-5 of 5 items</div>
<div class="r" style="left:2360px;top:692px;width:64px;height:64px;border-radius:50%;background:#f8f9fb"></div>
<div class="r" style="left:2440px;top:692px;width:64px;height:64px;border-radius:50%;background:#f8f9fb"></div>
<div class="r" style="left:2600px;top:692px;width:64px;height:64px;border-radius:50%;background:#f8f9fb"></div>
<div class="r" style="left:2680px;top:692px;width:64px;height:64px;border-radius:50%;background:#f8f9fb"></div>
<div class="r" style="left:2520px;top:692px;width:64px;height:64px;border-radius:50%;background:#3d69ad"></div>
<svg style="left:0;top:0" width="3022" height="1642"><path d="M2549.8 710.7 H2555.2 V730.9 H2560.2 V735.2 H2543.9 V730.9 H2549.8 V716.4 L2544.9 719.6 V714.8 Z" fill="#fff"/></svg>
<svg style="left:2360px;top:692px" width="64" height="64" viewBox="0 0 64 64"><path d="M22 22v20" stroke="#c8c8c8" stroke-width="3.5"/><path d="M40 23L31 32l9 9" fill="none" stroke="#c8c8c8" stroke-width="3.5"/></svg>
<svg style="left:2440px;top:692px" width="64" height="64" viewBox="0 0 64 64"><path d="M36 23L27 32l9 9" fill="none" stroke="#c8c8c8" stroke-width="3.5"/></svg>
<svg style="left:2600px;top:692px" width="64" height="64" viewBox="0 0 64 64"><path d="M28 23L37 32l-9 9" fill="none" stroke="#c8c8c8" stroke-width="3.5"/></svg>
<svg style="left:2680px;top:692px" width="64" height="64" viewBox="0 0 64 64"><path d="M24 23L33 32l-9 9" fill="none" stroke="#c8c8c8" stroke-width="3.5"/><path d="M42 22v20" stroke="#c8c8c8" stroke-width="3.5"/></svg>
<div class="t" style="left:2774.50px;top:709.69px;font-size:28.71px;line-height:28.71px;color:#1a1a1a;transform:scaleX(0.9895);transform-origin:0 0;font-weight:700;">Rows:</div>
<div class="r" style="left:2866px;top:692px;width:110px;height:64px;border-radius:32px;background:#edf0f5"></div>
<div class="t" style="left:2883.37px;top:709.45px;font-size:29.00px;line-height:29.00px;color:#1a1a1a;transform:scaleX(1.1156);transform-origin:0 0;">25</div>
<svg style="left:2932px;top:716px" width="20" height="14" viewBox="0 0 20 14"><path d="M3 4l7 7 7-7" fill="none" stroke="#1a1a1a" stroke-width="2.4"/></svg>
<svg style="left:26px;top:26px" width="60" height="60" viewBox="0 0 60 60"><g fill="#fff" stroke="#fff" stroke-width="0.8" stroke-linejoin="round"><path d="M15 41.6 C11 35 9 29 8.6 23.6 C6.5 21.5 5.8 19.5 6 17.5 C6.3 14.5 7.5 12.8 9.5 11.5 C11 10 12.5 9.3 14.5 9.2 C16 8.3 17.5 7.9 19 8.1 C21.5 8 24 8.2 25.7 8.8 C27.8 10 29.5 11.5 30.9 13.3 C28 14 25.5 14.8 23.1 16.3 C22.3 18 22.3 19.8 22.3 21.4 C21.5 22.8 20.8 23.5 20.1 24 C18.5 25 17 25.7 15 26.1 C14.2 28.5 14 30.5 14.1 32.1 C14.1 35 14.3 38 15 41.6 Z"/><path d="M25.3 6 C27 5.3 28.5 5.1 30 5.1 C32.5 5.2 34.5 5.5 36.4 6 C38.5 7 40.8 8.3 42.9 9.4 C45 9.6 47.3 9.8 49.3 10.3 C51.5 11.5 53 13.5 53.6 16.3 C54 18.3 53.8 20.3 53.1 22.3 C52.5 24.3 52 26 51.4 27.9 C50 29 48.6 30 47.1 30.9 C45 32 43 33 41.1 33.9 C41.4 31 41.7 28.5 41.6 25.7 C40.5 24 39 22.8 37.7 21.4 C37.3 19 37.3 17 37.3 15 C36 13 34.5 11.3 32.6 9.9 C30.3 8 27.8 6.8 25.3 6 Z"/><path d="M17.1 32.6 C19.5 34.5 21.8 36.2 24 37.3 C26 37 28 36.2 30 36 C32.5 36.5 35 38.5 37.3 39 C39.5 38.8 41.3 38.5 42.9 37.7 C45.5 36 48.3 34 50.6 31.7 C50.2 33.8 49.6 35.6 48.9 37.3 C47 39.5 45 41.5 42.9 43.3 C41 44.5 39.3 45.3 37.7 46.3 C36.5 47.8 36 49.3 35.1 50.6 C33.5 52 31.8 53 30 53.1 C28 53.1 26 52 24.4 50.6 C23 49 22 47.3 21 45.9 C19.8 45 18.8 44 18 42.9 C17.3 40.5 17 38.5 17.1 36.4 Z"/></g></svg>
<svg style="left:28px;top:128px" width="56" height="56" viewBox="0 0 56 56"><g fill="#c5cbd4"><path d="M22 14L40 23.6L22 34.2Z"/><rect x="12" y="40" width="4" height="4"/><rect x="20" y="40" width="24" height="4"/><rect x="12" y="48" width="4" height="4"/><rect x="20" y="48" width="24" height="4"/></g></svg>
<svg style="left:28px;top:228px" width="56" height="56" viewBox="0 0 56 56"><g fill="#dde5ef"><circle cx="31.4" cy="13.4" r="3.5"/><path d="M19.2 21.2 L28.8 17.6 L31.6 19.6 L35.2 24.8 L40 26.4 L40 28.8 L34.6 28 L31.6 26 L30.6 30.4 L33.6 33.2 L33.6 46 L30.4 46 L30.4 35.4 L27.4 33 L26 40 L14.4 37.6 L14.4 34 L22.6 35.4 L24.6 23.6 L22 24 L22 28.8 L19.2 28.8 Z"/></g><circle cx="39" cy="43" r="3.1" fill="#c5cbd4"/></svg>
<svg style="left:28px;top:325px" width="56" height="56" viewBox="0 0 56 56"><g fill="#c5cbd4"><circle cx="31.2" cy="8" r="3"/><circle cx="36" cy="17" r="4"/><path d="M24.2 7 C22 11 22.5 17 27.5 22" fill="none" stroke="#c5cbd4" stroke-width="4" stroke-linecap="round"/><path d="M25.6 21.6 L34 23.2 C37 24.5 39.5 27 40.2 31 C41 35 40.8 38.5 40 41.6 L35.2 39.6 C36 37.5 36.6 35.5 36.4 34 C36 32 35.2 30.5 34.4 29.6 L29.6 39.2 L22.4 50.8 L19.2 48.4 L24.8 38 L21.2 36.8 L18.4 41.2 L14.8 39.2 Z"/></g></svg>
<svg style="left:28px;top:420px" width="56" height="56" viewBox="0 0 56 56"><path d="M28 10 L44 16.5 V28 C44 36 37 42 28 46 C19 42 12 36 12 28 V16.5 Z" fill="none" stroke="#c5cbd4" stroke-width="4" stroke-linejoin="round"/><circle cx="28" cy="28" r="10" fill="#c5cbd4"/><circle cx="28" cy="28" r="5.7" fill="none" stroke="#23272f" stroke-width="2.2" stroke-dasharray="5.4 1.76" stroke-dashoffset="1.0"/><polygon points="28.00,25.20 30.47,27.00 29.53,29.90 26.47,29.90 25.53,27.00" fill="#23272f"/></svg>
<svg style="left:28px;top:516px" width="56" height="56" viewBox="0 0 56 56"><g fill="none" stroke="#c5cbd4" stroke-width="4"><rect x="10" y="14" width="36" height="28"/><path d="M12 23.6 H14 V32 H12 M44 23.6 H42 V32 H44"/><path d="M28 14 V22 M28 34 V42"/><circle cx="28" cy="28" r="4"/></g></svg>
<svg style="left:28px;top:612px" width="56" height="56" viewBox="0 0 56 56"><g fill="none" stroke="#c5cbd4" stroke-width="4"><path d="M20 12 H36 V22 C36 29 32.5 33.5 28 33.5 C23.5 33.5 20 29 20 22 Z"/><path d="M20 16 H12 V20 C12 25 15 28 20.5 28"/><path d="M36 16 H44 V20 C44 25 41 28 35.5 28"/><path d="M28 34 V43"/></g><rect x="18" y="42" width="20" height="4" fill="#c5cbd4"/></svg>
<svg style="left:28px;top:708px" width="56" height="56" viewBox="0 0 56 56"><g fill="none" stroke="#c5cbd4" stroke-width="4"><circle cx="41" cy="18.8" r="4.9"/><circle cx="23" cy="43" r="4.9"/><path d="M19.5 38.5 C13.5 33 11.5 26 14.5 20.5"/><path d="M24 37.5 C25 29 29 24 36.5 20.8"/></g><g transform="rotate(-12 18 14)" fill="#c5cbd4"><path d="M16.3 8 L18 7.6 L19.7 8 L20 12 L24 12.3 L24.4 14 L24 15.7 L20 16 L19.7 20 L18 20.4 L16.3 20 L16 16 L12 15.7 L11.6 14 L12 12.3 L16 12 Z"/></g><polygon points="38,30 44,34.8 42,42 34,42 32,34.8" fill="#c5cbd4"/></svg>
<svg style="left:28px;top:804px" width="56" height="56" viewBox="0 0 56 56"><g fill="#e8f0fb"><circle cx="29.6" cy="11.6" r="3.8"/><path d="M15.6 20.4 L25.6 16.4 L29.2 17.2 L34 23.6 C31.5 24 29.5 24.8 28 26 C25.5 28 24 30 23.4 32 C22.6 35 22.5 38 22.8 41.2 L9.6 38.4 L10.4 35.2 L19.6 36.8 L22 22.4 L18.8 23.2 L18.8 29.6 L15.2 29.6 Z"/></g><circle cx="34" cy="36" r="5.9" fill="none" stroke="#e8f0fb" stroke-width="4.2"/><path d="M38.5 40.5 L45 47" stroke="#e8f0fb" stroke-width="4.5"/></svg>
<svg style="left:30px;top:905px" width="52" height="40" viewBox="0 0 52 40"><g fill="none" stroke="#c5cbd4" stroke-width="4"><path d="M4 15.7 H14.6 L9.8 22.3 A4.5 4.5 0 1 1 5.2 29.6" stroke-linejoin="miter"/><path d="M26.6 14.2 L20.8 23.6"/><circle cx="24.9" cy="26.6" r="4.4"/><ellipse cx="40.6" cy="23.1" rx="5.3" ry="7.7"/></g></svg>
<svg style="left:28px;top:1470px" width="56" height="56" viewBox="0 0 56 56"><circle cx="28" cy="31.7" r="18.1" fill="none" stroke="#c5cbd4" stroke-width="3.8"/><path d="M21.8 27.2 C21.8 23.3 24.5 21.6 28 21.6 C31.6 21.6 34.6 23.6 34.6 27 C34.6 30 32.2 31.4 30.3 33.2 C28.8 34.6 28 35.6 28 38.3" fill="none" stroke="#c5cbd4" stroke-width="3.8"/><rect x="25.8" y="39.5" width="4.4" height="4.5" fill="#c5cbd4"/></svg>
<svg style="left:28px;top:1578px" width="56" height="44" viewBox="0 0 56 44"><circle cx="28" cy="12" r="6" fill="none" stroke="#c5cbd4" stroke-width="3.8"/><path d="M14 34.2 V29.5 C14 25.5 20 23.8 28 23.8 C36 23.8 42 25.5 42 29.5 V34.2 Z" fill="none" stroke="#c5cbd4" stroke-width="3.8" stroke-linejoin="round"/></svg>
</body></html>
